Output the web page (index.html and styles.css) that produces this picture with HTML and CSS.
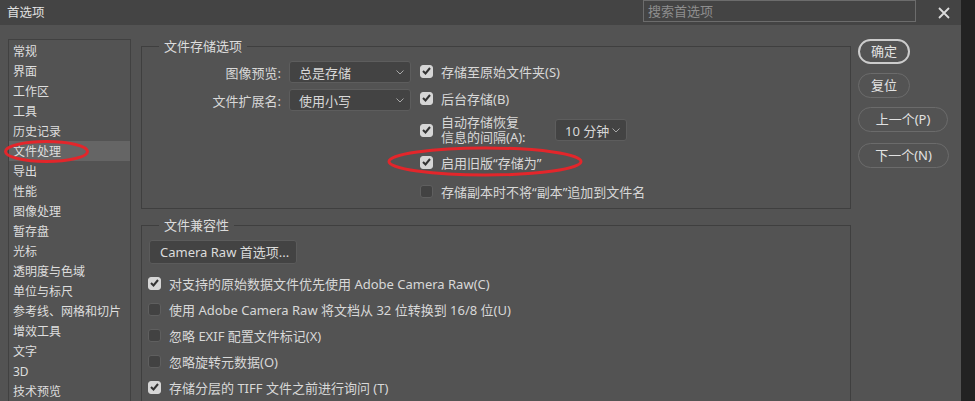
FILE: index.html
```html
<!DOCTYPE html>
<html lang="zh-CN">
<head>
<meta charset="utf-8">
<title>首选项</title>
<link rel="stylesheet" href="styles.css">
</head>
<body>
<div class="window">
  <div class="main">
    <header class="titlebar">
      <span class="title">首选项</span>
      <div class="search">搜索首选项</div>
      <span class="close"><svg width="12" height="12" viewBox="0 0 12 12"><path d="M1 1L11 11M11 1L1 11" stroke="#dcdcdc" stroke-width="1.8" fill="none"/></svg></span>
    </header>
    <div class="content">
      <nav class="sidebar">
        <div class="item">常规</div>
        <div class="item">界面</div>
        <div class="item">工作区</div>
        <div class="item">工具</div>
        <div class="item">历史记录</div>
        <div class="item selected">文件处理</div>
        <div class="item">导出</div>
        <div class="item">性能</div>
        <div class="item">图像处理</div>
        <div class="item">暂存盘</div>
        <div class="item">光标</div>
        <div class="item">透明度与色域</div>
        <div class="item">单位与标尺</div>
        <div class="item">参考线、网格和切片</div>
        <div class="item">增效工具</div>
        <div class="item">文字</div>
        <div class="item">3D</div>
        <div class="item">技术预览</div>
      </nav>
      <div class="panels">
        <fieldset class="group group-save">
          <legend>文件存储选项</legend>
          <div class="save-grid">
            <div class="left-col">
              <div class="field">
                <span class="flabel">图像预览:</span>
                <div class="select wide"><span>总是存储</span><svg class="chev" width="8" height="5" viewBox="0 0 8 5"><path d="M0.5 0.5L4 4L7.5 0.5" stroke="#a8a8a8" fill="none"/></svg></div>
              </div>
              <div class="field">
                <span class="flabel">文件扩展名:</span>
                <div class="select wide"><span>使用小写</span><svg class="chev" width="8" height="5" viewBox="0 0 8 5"><path d="M0.5 0.5L4 4L7.5 0.5" stroke="#a8a8a8" fill="none"/></svg></div>
              </div>
            </div>
            <div class="right-col">
              <div class="row"><span class="cb on"><svg width="9" height="8" viewBox="0 0 9 8"><path d="M1 4L3.5 6.5L8 1" stroke="#333" stroke-width="2" fill="none"/></svg></span><span>存储至原始文件夹(S)</span></div>
              <div class="row"><span class="cb on"><svg width="9" height="8" viewBox="0 0 9 8"><path d="M1 4L3.5 6.5L8 1" stroke="#333" stroke-width="2" fill="none"/></svg></span><span>后台存储(B)</span></div>
              <div class="row tall">
                <span class="cb on"><svg width="9" height="8" viewBox="0 0 9 8"><path d="M1 4L3.5 6.5L8 1" stroke="#333" stroke-width="2" fill="none"/></svg></span>
                <span class="twoline">自动存储恢复<br>信息的间隔(A):</span>
                <div class="select small"><span>10 分钟</span><svg class="chev" width="8" height="5" viewBox="0 0 8 5"><path d="M0.5 0.5L4 4L7.5 0.5" stroke="#a8a8a8" fill="none"/></svg></div>
              </div>
              <div class="row"><span class="cb on"><svg width="9" height="8" viewBox="0 0 9 8"><path d="M1 4L3.5 6.5L8 1" stroke="#333" stroke-width="2" fill="none"/></svg></span><span>启用旧版“存储为”</span></div>
              <div class="row last"><span class="cb"></span><span>存储副本时不将“副本”追加到文件名</span></div>
            </div>
          </div>
        </fieldset>
        <fieldset class="group group-compat">
          <legend>文件兼容性</legend>
          <div class="compat">
            <div class="btn-raw">Camera Raw 首选项...</div>
            <div class="rows">
              <div class="row"><span class="cb on"><svg width="9" height="8" viewBox="0 0 9 8"><path d="M1 4L3.5 6.5L8 1" stroke="#333" stroke-width="2" fill="none"/></svg></span><span>对支持的原始数据文件优先使用 Adobe Camera Raw(C)</span></div>
              <div class="row"><span class="cb"></span><span>使用 Adobe Camera Raw 将文档从 32 位转换到 16/8 位(U)</span></div>
              <div class="row"><span class="cb"></span><span>忽略 EXIF 配置文件标记(X)</span></div>
              <div class="row"><span class="cb"></span><span>忽略旋转元数据(O)</span></div>
              <div class="row"><span class="cb on"><svg width="9" height="8" viewBox="0 0 9 8"><path d="M1 4L3.5 6.5L8 1" stroke="#333" stroke-width="2" fill="none"/></svg></span><span>存储分层的 TIFF 文件之前进行询问 (T)</span></div>
            </div>
          </div>
        </fieldset>
      </div>
      <div class="actions">
        <div class="pill primary">确定</div>
        <div class="pill">复位</div>
        <div class="pill wide">上一个(P)</div>
        <div class="pill wide next">下一个(N)</div>
      </div>
    </div>
  </div>
  <div class="strip"></div>
</div>
<svg class="marks" width="975" height="401" viewBox="0 0 975 401">
  <ellipse cx="46.5" cy="151.5" rx="41" ry="10" stroke="#e3262b" stroke-width="3" fill="none"/>
  <ellipse cx="485" cy="161.5" rx="96" ry="13.5" stroke="#e3262b" stroke-width="3" fill="none"/>
</svg>
</body>
</html>
```

FILE: styles.css
```css
* { box-sizing: border-box; }
html, body {
  margin: 0;
  padding: 0;
  width: 975px;
  height: 401px;
  overflow: hidden;
  background: #535353;
  font-family: "Noto Sans", "Noto Sans CJK SC", sans-serif;
  color: #d8d8d8;
  font-size: 13px;
}
.window {
  display: flex;
  height: 401px;
  position: relative;
}
.main {
  width: 961px;
  display: flex;
  flex-direction: column;
}
.strip {
  width: 14px;
  background: #222222;
}
.titlebar {
  height: 25px;
  background: #444444;
  display: flex;
  align-items: flex-start;
  padding-left: 7px;
}
.title {
  flex: 1;
  font-size: 12.5px;
  line-height: 25px;
  color: #e0e0e0;
}
.search {
  width: 273px;
  height: 22px;
  border: 1px solid #6c6c6c;
  background: #444444;
  color: #8e8e8e;
  font-size: 13px;
  line-height: 20px;
  padding-left: 4px;
}
.close {
  width: 12px;
  height: 12px;
  margin: 7px 11px 0 22px;
  display: flex;
}
.content {
  flex: 1;
  display: flex;
  align-items: flex-start;
  padding: 14px 0 0 8px;
}
.sidebar {
  width: 123px;
  height: 380px;
  border: 1px solid #414141;
  border-bottom: none;
  padding-top: 1px;
}
.item {
  height: 20px;
  line-height: 22px;
  font-size: 12px;
  padding-left: 4px;
  color: #dedede;
  white-space: nowrap;
}
.item.selected {
  background: #656565;
}
.panels {
  width: 710px;
  margin-left: 10px;
}
.group {
  margin: 0;
  padding: 0;
  border: 1px solid #3f3f3f;
  min-width: 0;
}
.group legend {
  margin-left: 17px;
  padding: 0 5px;
  line-height: 14px;
  font-size: 13px;
  color: #dcdcdc;
}
.group-compat {
  margin-top: 9px;
  height: 200px;
  border-bottom: none;
}
.save-grid {
  display: flex;
  padding: 7px 0 6px 0;
}
.left-col {
  display: flex;
  flex-direction: column;
  gap: 6px;
  margin-top: 1px;
}
.field {
  display: flex;
  align-items: center;
  height: 22px;
}
.flabel {
  width: 140px;
  text-align: right;
  padding-right: 1px;
}
.select {
  height: 22px;
  background: #434343;
  border: 1px solid #5d5d5d;
  border-radius: 3px;
  display: flex;
  align-items: center;
  justify-content: space-between;
  padding: 0 6px 0 9px;
}
.select.wide {
  width: 122px;
  margin-left: 7px;
}
.select.small {
  width: 72px;
  margin-left: 6px;
}
.chev { flex: none; }
.right-col {
  margin-left: 9px;
  display: flex;
  flex-direction: column;
  gap: 5px;
}
.row {
  display: flex;
  align-items: center;
  height: 22px;
  white-space: nowrap;
}
.row.tall {
  height: 32px;
}
.row.last {
  margin-top: 2px;
}
.twoline {
  line-height: 15px;
  width: 108px;
}
.cb {
  width: 13px;
  height: 13px;
  border-radius: 3px;
  background: #424242;
  border: 1px solid #5f5f5f;
  margin-right: 8px;
  display: flex;
  align-items: center;
  justify-content: center;
  flex: none;
}
.cb.on {
  background: #d6d6d6;
  border-color: #d6d6d6;
}
.compat {
  padding: 8px 0 0 7px;
}
.btn-raw {
  width: 148px;
  height: 24px;
  background: #434343;
  border: 1px solid #5b5b5b;
  border-radius: 3px;
  line-height: 22px;
  padding-left: 10px;
  color: #dcdcdc;
}
.rows {
  margin-top: 8px;
  margin-left: -1px;
  display: flex;
  flex-direction: column;
  gap: 4px;
}
.actions {
  margin-left: 7px;
  display: flex;
  flex-direction: column;
  align-items: flex-start;
  gap: 9px;
}
.pill {
  width: 52px;
  height: 25px;
  border: 1.5px solid #6b6b6b;
  border-radius: 13px;
  text-align: center;
  line-height: 22px;
  color: #e2e2e2;
}
.pill.primary {
  border: 2px solid #cccccc;
  line-height: 21px;
}
.pill.wide {
  width: 90px;
}
.pill.next {
  width: 91px;
  margin-top: 2px;
}
.marks {
  position: absolute;
  left: 0;
  top: 0;
  pointer-events: none;
}
```
